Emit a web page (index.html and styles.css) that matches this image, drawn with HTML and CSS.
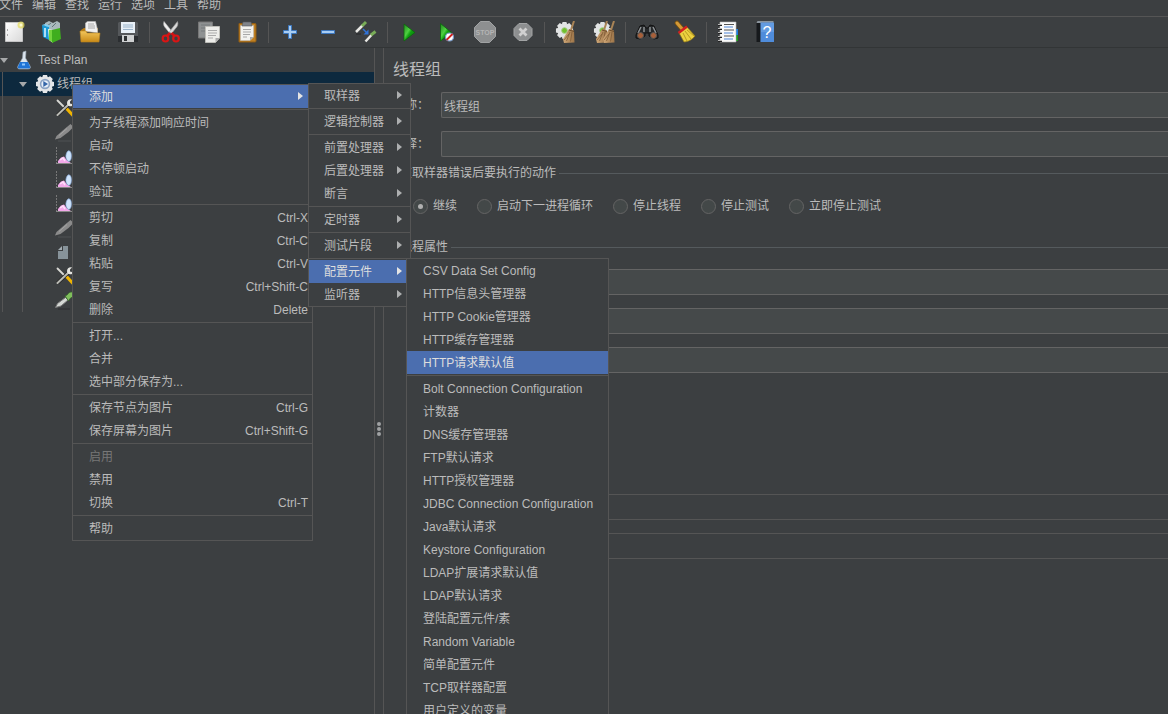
FILE: index.html
```html
<!DOCTYPE html>
<html lang="zh-CN">
<head>
<meta charset="utf-8">
<title>Test Plan</title>
<link rel="stylesheet" href="styles.css">
</head>
<body>
<svg class="defs" aria-hidden="true">
  <defs>
    <linearGradient id="g-green" x1="0" y1="0" x2="1" y2="1"><stop offset="0" stop-color="#1f8a1c"/><stop offset=".4" stop-color="#4fd042"/><stop offset=".55" stop-color="#0fa010"/><stop offset="1" stop-color="#067006"/></linearGradient>
    <linearGradient id="g-gold" x1="0" y1="0" x2="0" y2="1"><stop offset="0" stop-color="#f2c65c"/><stop offset="1" stop-color="#c98a17"/></linearGradient>
    <linearGradient id="g-page" x1="0" y1="0" x2="1" y2="1"><stop offset="0" stop-color="#fff"/><stop offset="1" stop-color="#d9d9d9"/></linearGradient>
    <linearGradient id="g-straw" x1="0" y1="0" x2="1" y2="0"><stop offset="0" stop-color="#d0a878"/><stop offset="1" stop-color="#9c7448"/></linearGradient>
  </defs>
  <symbol id="i-gear" viewBox="0 0 20 20">
    <g fill="#e4e6e8"><circle cx="10" cy="10" r="7.200"/><path id="teeth" d="M8 1h4l1 3H7zM8 19h4l1-3H7zM1 8v4l3 1V7zM19 8v4l-3 1V7z"/><path d="M8 1h4l1 3H7zM8 19h4l1-3H7zM1 8v4l3 1V7zM19 8v4l-3 1V7z" transform="rotate(45 10 10)"/></g>
    <circle cx="10" cy="10" r="4.400" fill="#e6eef8" stroke="#8aa3c4" stroke-width="1.600"/><path d="M8.300 7v6l4.700-3z" fill="#3566a8"/>
  </symbol>
  <symbol id="i-gear-plain" viewBox="0 0 20 20">
    <g fill="#e2e4e4"><circle cx="10" cy="10" r="7.200"/><path d="M8 1h4l1 3H7zM8 19h4l1-3H7zM1 8v4l3 1V7zM19 8v4l-3 1V7z"/><path d="M8 1h4l1 3H7zM8 19h4l1-3H7zM1 8v4l3 1V7zM19 8v4l-3 1V7z" transform="rotate(45 10 10)"/></g>
    <circle cx="10" cy="10" r="3" fill="#6fc02c" stroke="#a9c98c"/>
  </symbol>
  <symbol id="i-tools" viewBox="0 0 20 20">
    <path d="M2.500 2.500l8 8" stroke="#d8d8d4" stroke-width="1.800" stroke-linecap="round"/><path d="M12 11l6 6.500" stroke="#f0b400" stroke-width="3.200" stroke-linecap="round"/><path d="M2.500 17L13 7" stroke="#222" stroke-width="3.400"/><path d="M2.500 17L13 7" stroke="#b9bab4" stroke-width="2" stroke-linecap="round"/><path d="M17 1.500c-2.500-.8-5 .8-5 3.500s2.400 4 5 3v-2l-2-.6V3.500z" fill="#e4e4e0"/>
  </symbol>
  <symbol id="i-pipe-off" viewBox="0 0 20 20">
    <path d="M0 17.500l1.500-3.500 8-7 6-5 3 3-5 5-8 6z" fill="#8b8b8b"/><path d="M4 13.500l8-7" stroke="#a5a5a5"/><path d="M3 19h13" stroke="#4f5254"/>
  </symbol>
  <symbol id="i-pipe" viewBox="0 0 20 20">
    <path d="M.5 17.500l2-4 8-6 2.500 2.500-7 6z" fill="#d4d8d4" stroke="#777"/><path d="M10 6l2-1c2-3 5-4 6-2s0 4-3 5.500L13.500 11z" fill="#7fbf5c" stroke="#33612a" stroke-width=".8"/><path d="M3 19h12" stroke="#2d2f30"/>
  </symbol>
  <symbol id="i-chart" viewBox="0 0 20 20">
    <path d="M1.500 1v17" stroke="#777" stroke-dasharray="2 1"/><path d="M1 17.500h18" stroke="#888"/><path d="M3 17v-2l3-3.500 3-1 3 4 4 2.500z" fill="#f3a9ea"/><path d="M5 14l3-2 2 3" stroke="#ffe0fa" stroke-width="1.500" fill="none"/><path d="M13 5c3-1 4 4 3 8-1 3-3 3-4 1-2-3-1-7 1-9z" fill="#cfe4fb" stroke="#8daede" stroke-width=".7"/>
  </symbol>
  <symbol id="i-doc" viewBox="0 0 20 20"><path d="M8 4h5v13H3V9h5z" fill="#87939a"/><path d="M3 8l4-4v4z" fill="#a3adb3"/></symbol>
  <symbol id="i-broom" viewBox="0 0 12 22">
    <path d="M11 0L8 9" stroke="#a98456" stroke-width="2"/><path d="M6 8l5 1.500.5 12L1 22l-1-4z" fill="url(#g-straw)"/><path d="M7 11l-3.500 9M9 11l-1.500 9.500M6 13l-5 6" stroke="#7a5630" stroke-width=".7"/><path d="M6 9l5 1.500" stroke="#6e4d2b"/>
  </symbol>
</svg>

<nav class="menubar" aria-label="主菜单">
  <button>文件</button><button>编辑</button><button>查找</button><button>运行</button><button>选项</button><button>工具</button><button>帮助</button>
</nav>

<div class="toolbar" role="toolbar">
  <button aria-label="新建"><svg viewBox="0 0 24 24"><path d="M3.500 2.500h17v19h-17z" fill="url(#g-page)" stroke="#c4c4c4"/><path d="M5.500 9v2M5.500 14v2" stroke="#aaa"/><circle cx="19" cy="5" r="3.500" fill="#e6dc62" opacity=".75"/><circle cx="19" cy="5" r="1.500" fill="#fffbd0"/></svg></button>
  <button aria-label="模板"><svg viewBox="0 0 24 24"><path d="M5 8V3l4-2 4 2 4-2 3 2v7H5z" fill="#a9b8bc"/><path d="M7 6l4-3M12 7l4-4" stroke="#5f7479"/><path d="M2 5l7 2v13l-6-3z" fill="#1a9ad6"/><path d="M2 5l3-1 6 2-2 1z" fill="#7fd0f5"/><path d="M5 8v9" stroke="#dff4ff" stroke-width="1.500"/><path d="M8 9l5 1v13l-4-3z" fill="#e8f8dc"/><path d="M12 10l8-2 1 11-9 4z" fill="#3fae1e"/><path d="M9 10h3v12l-3-2z" fill="#73d53e"/></svg></button>
  <button aria-label="打开"><svg viewBox="0 0 24 24"><path d="M3 10l3-2h14v4H3z" fill="#b77c16"/><path d="M7.500 11V3l2-1.500h8l2 8V13z" fill="#f1f1f1" stroke="#bbb" stroke-width=".6"/><path d="M10 4h6M10 6h7M10 8h7" stroke="#a8a8a8"/><path d="M2 11h6l1 2h13l-1 9H3z" fill="url(#g-gold)" stroke="#b98320" stroke-width=".6"/></svg></button>
  <button aria-label="保存"><svg viewBox="0 0 24 24"><path d="M3 2h18l1 1v19H2V3z" fill="#55585b"/><path d="M2 16h20v6H2z" fill="#2b2e31"/><path d="M5 2h14v11H5z" fill="#e8f0f7"/><path d="M7 5h10M7 7h10M7 9.500h10" stroke="#9ab4cb"/><path d="M6 15h12v7H6z" fill="#cfd1d2"/><path d="M8 16h3v5H8z" fill="#303335"/></svg></button>
  <span class="sep"></span>
  <button aria-label="剪切"><svg viewBox="0 0 24 24"><path d="M5 1.500c-1 3 0 5 2 7l4 5 2-2z" fill="#eee" stroke="#bbb" stroke-width=".6"/><path d="M18.500 1.500c1 3 0 5-2 7l-4 5-2-2z" fill="#d8d8d8" stroke="#999" stroke-width=".6"/><path d="M11 13l-3 3M12.500 13l3 3" stroke="#d31313" stroke-width="2.500"/><ellipse cx="6.500" cy="18.500" rx="2.800" ry="3" fill="none" stroke="#d91515" stroke-width="2.200"/><ellipse cx="17" cy="18.500" rx="2.800" ry="3" fill="none" stroke="#d91515" stroke-width="2.200"/></svg></button>
  <button aria-label="复制"><svg viewBox="0 0 24 24"><path d="M1.500 2h14v16h-14z" fill="#8e9192" stroke="#777"/><path d="M4 5h9M4 8h9M4 11h9" stroke="#777b7c"/><path d="M8.500 6.500h14V18l-4 4.500h-10z" fill="#ededea" stroke="#bdbdb8"/><path d="M11 10.500h9M11 13h9M11 15.500h8M11 18h5" stroke="#aaa"/><path d="M18.500 22v-4h4z" fill="#aaa"/></svg></button>
  <button aria-label="粘贴"><svg viewBox="0 0 24 24"><path d="M4 3.500h16a1 1 0 0 1 1 1V21a1 1 0 0 1-1 1H4z" fill="#c08022" stroke="#8f5c14"/><path d="M5.500 5.500h13V17l-3.500 3.500H5.500z" fill="#f2f2ef" stroke="#bbb" stroke-width=".5"/><path d="M8 2h8l1 4H7z" fill="#80848a" stroke="#55595d" stroke-width=".6"/><path d="M8 9.500h8M8 12h8M8 14.500h7M8 17h4" stroke="#a8a8a8"/><path d="M15 20.500V17h3.500z" fill="#aaa"/></svg></button>
  <span class="sep"></span>
  <button aria-label="展开"><svg viewBox="0 0 24 24"><path d="M10.500 5.500h3v5h5v3h-5v5h-3v-5h-5v-3h5z" fill="#a8cdf3" stroke="#3d78c0"/></svg></button>
  <button aria-label="折叠"><svg viewBox="0 0 24 24"><path d="M5.500 10.500h13v3h-13z" fill="#a8cdf3" stroke="#3d78c0"/></svg></button>
  <button aria-label="切换"><svg viewBox="0 0 24 24"><path d="M2 12l6.500-6.500" stroke="#e8e8e4" stroke-width="2.500"/><path d="M8 6l4-4" stroke="#79ad58" stroke-width="3"/><path d="M11.500 21.500l6-6.500" stroke="#e8e8e4" stroke-width="2.500"/><path d="M17 15l4.500-3.500" stroke="#79ad58" stroke-width="3"/><path d="M2 14h5" stroke="#252729"/><path d="M9 9l4 4" stroke="#2f72d8" stroke-width="1.500"/><path d="M14.500 9.500v5h-5z" fill="#2f72d8"/></svg></button>
  <span class="sep"></span>
  <button aria-label="启动"><svg viewBox="0 0 24 24"><path d="M7 4l11 8.500L7 21z" fill="url(#g-green)" stroke="#0c640c" stroke-width=".8"/></svg></button>
  <button aria-label="不停顿启动"><svg viewBox="0 0 24 24"><path d="M5.500 3.500l11 9-11 8.500z" fill="url(#g-green)" stroke="#0c640c" stroke-width=".8"/><circle cx="14.500" cy="17" r="4" fill="#fff" stroke="#7798c7" stroke-width="1.200"/><path d="M11.500 20l6-6" stroke="#d02020" stroke-width="1.800"/></svg></button>
  <button aria-label="停止" disabled><svg viewBox="0 0 24 24"><path d="M7.500 1.500h9l6 6v9l-6 6h-9l-6-6v-9z" fill="#8d8f90" stroke="#a0a2a3"/><text class="stop-text" x="12" y="15">STOP</text></svg></button>
  <button aria-label="关闭" disabled><svg viewBox="0 0 24 24"><path d="M8 3.500h8l5 5v7l-5 5H8l-5-5v-7z" fill="#8d8f90" stroke="#a2a4a5"/><path d="M8.500 8.500l7 7M15.500 8.500l-7 7" stroke="#d0d0d0" stroke-width="2.800"/></svg></button>
  <span class="sep"></span>
  <button aria-label="清除"><svg viewBox="0 0 24 24"><use href="#i-gear-plain" x="1" y="1" width="19" height="19"/><use href="#i-broom" x="9" y="1" width="12" height="22"/></svg></button>
  <button aria-label="清除全部"><svg viewBox="0 0 24 24"><use href="#i-gear-plain" x="1" y="1" width="19" height="19"/><use href="#i-broom" x="4" y="1" width="12" height="22"/><use href="#i-broom" x="11" y="1" width="12" height="22"/></svg></button>
  <span class="sep"></span>
  <button aria-label="查找"><svg viewBox="0 0 24 24"><path d="M5 6l4-1 2 3h2l2-3 4 1 4 9v3l-4 1-5-3v-3h-4v3l-5 3-4-1v-3z" fill="#25282a" stroke="#111"/><path d="M6 7l-3 6M9 7v5M18 7l3 6M15 7v5" stroke="#8d9194" stroke-width="1.500"/><circle cx="5.500" cy="15.500" r="3" fill="#a8603a" stroke="#555"/><circle cx="18.500" cy="15.500" r="3" fill="#a8603a" stroke="#555"/></svg></button>
  <button aria-label="清除搜索"><svg viewBox="0 0 24 24"><path d="M4 3l6 7" stroke="#7a5210" stroke-width="4.500" stroke-linecap="round"/><path d="M4 3l6 7" stroke="#d49a38" stroke-width="3" stroke-linecap="round"/><path d="M6 13l8-6 8 9c-2 3-7 6-11 6z" fill="#ecd13f" stroke="#8f7616" stroke-width=".7"/><path d="M10 13l4 8M12 11l6 8M14 10l7 6" stroke="#a98c1a" stroke-width=".8"/><path d="M5.500 13L14 6.500" stroke="#d22020" stroke-width="2.600"/></svg></button>
  <span class="sep"></span>
  <button aria-label="函数助手"><svg viewBox="0 0 24 24"><path d="M19 9h3v6h-3z" fill="#1c7ee0"/><path d="M19 15h3v6h-3z" fill="#1b9c1b"/><path d="M4 2h16v20H4z" fill="#fafafa" stroke="#bbb" stroke-width=".6"/><path d="M8 4.500h10M8 10h10M8 16h10" stroke="#555"/><path d="M8 7h9M8 13h9M8 19h9" stroke="#4f86d8" stroke-width="1.200"/><path d="M2 5h4M2 9h4M2 13h4M2 17h4M2 21h4" stroke="#222" stroke-width="1.800"/><path d="M2 4.500h4M2 8.500h4M2 12.500h4M2 16.500h4M2 20.500h4" stroke="#ddd" stroke-width=".8"/></svg></button>
  <button aria-label="帮助"><svg viewBox="0 0 24 24"><path d="M2.500 3l1-2h16v2z" fill="#8b949c"/><path d="M2.500 3h4v19h-4z" fill="#16191c"/><path d="M6.500 2.500H20V22H6.500z" fill="#4f8cdb"/><path d="M7 3h13v9H7z" fill="#75a9e8" opacity=".5"/><text class="help-text" x="13" y="18">?</text></svg></button>
</div>

<main class="split">
  <section class="tree" aria-label="测试计划">
    <div class="node root"><span class="tri down"></span><svg viewBox="0 0 20 20"><path d="M9 2l3-1-.5 7 4.500 8c1 2 0 3-2 3H6c-2 0-3-1-2-3l4.500-8z" fill="#dbe5ee" stroke="#9aa8b4" stroke-width=".6"/><path d="M6 12h8l2 4.500c.5 1.500 0 2-2 2H6c-2 0-2.500-.5-2-2z" fill="#1f74d6"/><path d="M8 13.500h3v2H8z" fill="#8cc6ff"/></svg><span>Test Plan</span></div>
    <div class="branch">
      <div class="node selected"><span class="tri down"></span><svg viewBox="0 0 20 20"><use href="#i-gear"/></svg><span>线程组</span></div>
      <div class="leaves">
        <div class="node"><svg><use href="#i-tools"/></svg></div>
        <div class="node"><svg><use href="#i-pipe-off"/></svg></div>
        <div class="node"><svg><use href="#i-chart"/></svg></div>
        <div class="node"><svg><use href="#i-chart"/></svg></div>
        <div class="node"><svg><use href="#i-chart"/></svg></div>
        <div class="node"><svg><use href="#i-pipe-off"/></svg></div>
        <div class="node"><svg><use href="#i-doc"/></svg></div>
        <div class="node"><svg><use href="#i-tools"/></svg></div>
        <div class="node"><svg><use href="#i-pipe"/></svg></div>
      </div>
    </div>
  </section>
  <div class="divider"><i></i><i></i><i></i></div>
  <form class="editor">
    <h1>线程组</h1>
    <div class="row"><label for="name">名称：</label><input id="name" type="text" value="线程组"></div>
    <div class="row"><label for="note">注释：</label><input id="note" type="text"></div>
    <fieldset>
      <legend>在取样器错误后要执行的动作</legend>
      <div class="actions">
        <label><input type="radio" name="act" checked><span>继续</span></label>
        <label><input type="radio" name="act"><span>启动下一进程循环</span></label>
        <label><input type="radio" name="act"><span>停止线程</span></label>
        <label><input type="radio" name="act"><span>停止测试</span></label>
        <label><input type="radio" name="act"><span>立即停止测试</span></label>
      </div>
    </fieldset>
    <fieldset>
      <legend>线程属性</legend>
      <div class="props">
        <input type="text" aria-label="线程数">
        <input type="text" aria-label="时间">
        <input type="text" aria-label="循环次数">
      </div>
    </fieldset>
    <div class="boxes"><div></div><div></div></div>
  </form>
</main>

<ul class="menu context">
  <li><button class="on">添加<span class="tri"></span></button></li>
  <li class="line"><button>为子线程添加响应时间</button></li>
  <li><button>启动</button></li>
  <li><button>不停顿启动</button></li>
  <li><button>验证</button></li>
  <li class="line"><button>剪切<kbd>Ctrl-X</kbd></button></li>
  <li><button>复制<kbd>Ctrl-C</kbd></button></li>
  <li><button>粘贴<kbd>Ctrl-V</kbd></button></li>
  <li><button>复写<kbd>Ctrl+Shift-C</kbd></button></li>
  <li><button>删除<kbd>Delete</kbd></button></li>
  <li class="line"><button>打开...</button></li>
  <li><button>合并</button></li>
  <li><button>选中部分保存为...</button></li>
  <li class="line"><button>保存节点为图片<kbd>Ctrl-G</kbd></button></li>
  <li><button>保存屏幕为图片<kbd>Ctrl+Shift-G</kbd></button></li>
  <li class="line"><button disabled>启用</button></li>
  <li><button>禁用</button></li>
  <li><button>切换<kbd>Ctrl-T</kbd></button></li>
  <li class="line"><button>帮助</button></li>
</ul>

<ul class="menu add">
  <li><button>取样器<span class="tri"></span></button></li>
  <li class="line"><button>逻辑控制器<span class="tri"></span></button></li>
  <li class="line"><button>前置处理器<span class="tri"></span></button></li>
  <li><button>后置处理器<span class="tri"></span></button></li>
  <li><button>断言<span class="tri"></span></button></li>
  <li class="line"><button>定时器<span class="tri"></span></button></li>
  <li class="line"><button>测试片段<span class="tri"></span></button></li>
  <li class="line"><button class="on">配置元件<span class="tri"></span></button></li>
  <li><button>监听器<span class="tri"></span></button></li>
</ul>

<ul class="menu config">
  <li><button>CSV Data Set Config</button></li>
  <li><button>HTTP信息头管理器</button></li>
  <li><button>HTTP Cookie管理器</button></li>
  <li><button>HTTP缓存管理器</button></li>
  <li><button class="on">HTTP请求默认值</button></li>
  <li class="line"><button>Bolt Connection Configuration</button></li>
  <li><button>计数器</button></li>
  <li><button>DNS缓存管理器</button></li>
  <li><button>FTP默认请求</button></li>
  <li><button>HTTP授权管理器</button></li>
  <li><button>JDBC Connection Configuration</button></li>
  <li><button>Java默认请求</button></li>
  <li><button>Keystore Configuration</button></li>
  <li><button>LDAP扩展请求默认值</button></li>
  <li><button>LDAP默认请求</button></li>
  <li><button>登陆配置元件/素</button></li>
  <li><button>Random Variable</button></li>
  <li><button>简单配置元件</button></li>
  <li><button>TCP取样器配置</button></li>
  <li><button>用户定义的变量</button></li>
</ul>
</body>
</html>
```

FILE: styles.css
```css
* { box-sizing: border-box; }

body {
  margin: 0;
  height: 100vh;
  overflow: hidden;
  position: relative;
  display: flex;
  flex-direction: column;
  background: #3c3f41;
  color: #bbbbbb;
  font: 12px/16px "Liberation Sans", "Noto Sans CJK SC", sans-serif;
}

button, input, kbd { font: inherit; color: inherit; }
button { background: none; border: 0; padding: 0; text-align: left; }
.defs { position: absolute; width: 0; height: 0; }

.menubar {
  display: flex;
  gap: 9px;
  height: 16px;
  margin-left: -1px;
  align-items: flex-start;
  line-height: 10px;
  white-space: nowrap;
}

.toolbar {
  display: flex;
  align-items: center;
  height: 32px;
  padding-right: 8px;
  border-top: 1px solid #555555;
  border-bottom: 1px solid #323536;
}
.toolbar button { display: flex; justify-content: center; width: 38px; flex: none; }
.toolbar button:first-child { margin-left: -5px; }
.toolbar svg { width: 24px; height: 24px; }
.sep { width: 5px; height: 21px; display: flex; justify-content: center; }
.sep::before { content: ""; width: 1px; background: #555555; }
.stop-text { font: bold 7px "Liberation Sans", sans-serif; fill: #b4b4b4; text-anchor: middle; }
.help-text { font: 16px "Liberation Sans", sans-serif; fill: #ffffff; text-anchor: middle; }

.split { flex: 1; display: flex; min-height: 0; }
.tree { flex: 0 0 375px; border-right: 1px solid #555555; overflow: hidden; }
.node { display: flex; align-items: center; height: 24px; }
.node svg { width: 20px; height: 20px; flex: none; }
.root { gap: 6px; }
.root svg { margin-right: -2px; }
.branch {
  padding-left: 2px;
  background: linear-gradient(#555555, #555555) 2px 0 / 1px 100% no-repeat;
}
.selected {
  gap: 8px;
  margin-left: -2px;
  padding-left: 19px;
  background: linear-gradient(#555555, #555555) 2px 0 / 1px 100% no-repeat #0d293e;
}
.selected svg { margin-right: -6px; }
.leaves { margin-left: 20px; border-left: 1px solid #555555; padding-left: 32px; }
.tri { flex: none; width: 0; height: 0; border: 4px solid transparent; }
.tri.down { border-top: 5px solid #a7a9aa; border-bottom: 0; }

.divider {
  flex: none;
  width: 8px;
  padding-top: 96px;
  display: flex;
  flex-direction: column;
  align-items: center;
  justify-content: center;
  gap: 1px;
}
.divider i { width: 4px; height: 4px; border-radius: 2px; background: #a0a2a3; }

.editor {
  flex: 1;
  min-width: 0;
  padding: 9px 0 0 9px;
  border-left: 1px solid #555555;
}
h1 { margin: 0 0 9px; font-size: 16px; line-height: 26px; font-weight: normal; }
.row { display: grid; grid-template-columns: 48px 1fr; align-items: center; margin-bottom: 13px; }
input[type="text"] {
  display: block;
  width: 100%;
  height: 26px;
  padding: 0 2px;
  border: 1px solid #646464;
  border-right: 0;
  border-radius: 2px 0 0 2px;
  background: #45494a;
  outline: none;
}
fieldset { margin: 0; padding: 0; border: 0; border-top: 1px solid #555a5d; min-width: 0; }
legend { margin-left: 4px; padding: 0 3px; }
.row + fieldset { margin-top: -5px; }
.actions {
  padding: 17px 0 25px 20px;
  display: flex;
  gap: 20px;
  white-space: nowrap;
}
.actions label { display: flex; align-items: center; gap: 5px; }
.actions span { padding-top: 1px; line-height: 15px; }
input[type="radio"] {
  appearance: none;
  display: grid;
  place-items: center;
  width: 15px;
  height: 15px;
  margin: 0;
  border: 1px solid #646464;
  border-radius: 50%;
  background: #434848;
}
input[type="radio"]:checked::before {
  content: "";
  width: 5px;
  height: 5px;
  border-radius: 50%;
  background: #b0b0b0;
}
.props { padding: 14px 0 0 120px; display: grid; gap: 13px; }
.boxes { display: grid; gap: 13px; margin-top: 121px; padding-left: 120px; }
.boxes div { height: 26px; border: 1px solid #555555; border-right: 0; }

.menu {
  position: absolute;
  margin: 0;
  padding: 0;
  list-style: none;
  border: 1px solid #555555;
  background: #3c3f41;
  white-space: nowrap;
}
.menu button {
  display: flex;
  justify-content: space-between;
  align-items: center;
  width: 100%;
  height: 23px;
  padding: 0 4px 0 16px;
}
.menu .line { padding-top: 3px; background: linear-gradient(#555555, #555555) 0 1px / 100% 1px no-repeat; }
.menu .on { background: #4b6eaf; color: #dddddd; }
.menu button:disabled { color: #777777; }
.menu .tri { border-left: 5px solid #adafb0; border-right: 0; margin: 0 5px 1px 0; }
.menu .on .tri { border-left-color: #e4e4e4; }
.context { left: 72px; top: 84px; width: 241px; }
.add { left: 308px; top: 83px; width: 103px; }
.add button { padding-left: 15px; }
.add .tri { margin-right: 4px; }
.config { left: 406px; top: 258px; width: 203px; }
```
